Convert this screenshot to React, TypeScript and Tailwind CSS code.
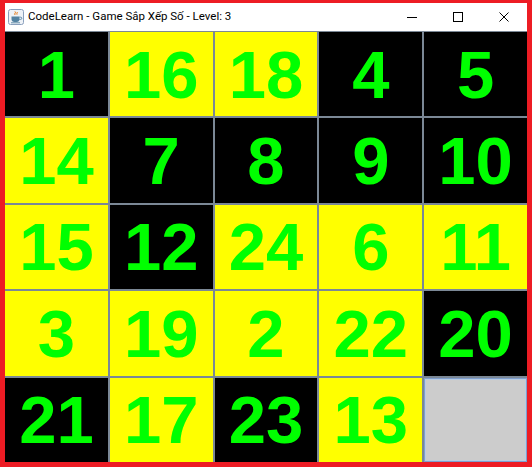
import React from 'react';

// Board layout, 0 = empty slot
const tiles = [1, 16, 18, 4, 5, 14, 7, 8, 9, 10, 15, 12, 24, 6, 11, 3, 19, 2, 22, 20, 21, 17, 23, 13, 0];
const yellow = new Set([16, 18, 14, 15, 24, 6, 11, 3, 19, 2, 22, 17, 13]);

const JavaIcon: React.FC = () => (
  <svg width="16" height="16" viewBox="0 0 16 16">
    <rect x="0.5" y="0.5" width="15" height="15" rx="2" fill="#eef2f7" stroke="#8aa0bd" />
    <path d="M7 2.5c1.5 1.2-1.2 2 0 3.4M9 3c1 1-1 1.6 0 2.6" stroke="#e76f00" strokeWidth="1" fill="none" />
    <path d="M3.5 7.5h8v2.5a3 3 0 0 1-3 3h-2a3 3 0 0 1-3-3z" fill="#5382a1" />
    <path d="M11.5 8.2h1.2a1.1 1.1 0 0 1 0 2.2h-1.4" stroke="#5382a1" strokeWidth="0.9" fill="none" />
    <path d="M3 13.8h9" stroke="#5382a1" strokeWidth="0.9" />
  </svg>
);

const App: React.FC = () => {
  return (
    <div className="w-[532px] h-[467px] bg-[#ed1c24] pt-[3px] px-[5px] pb-[5px] flex flex-col">
      {/* Title bar */}
      <div className="h-[28px] bg-white flex items-center shrink-0">
        <div className="pl-[3px] pr-[4px] flex items-center">
          <JavaIcon />
        </div>
        <span className="text-[11.5px] text-black font-['Roboto',sans-serif]">
          CodeLearn - Game Sắp Xếp Số - Level: 3
        </span>
        <div className="ml-auto flex items-center h-full">
          <div className="w-[46px] h-full flex items-center justify-center">
            <div className="w-[10px] h-px bg-black" />
          </div>
          <div className="w-[46px] h-full flex items-center justify-center">
            <div className="w-[10px] h-[10px] border border-black" />
          </div>
          <div className="w-[46px] h-full flex items-center justify-center">
            <svg width="10" height="10" viewBox="0 0 10 10">
              <path d="M0.5 0.5l9 9M9.5 0.5l-9 9" stroke="#000" strokeWidth="1" />
            </svg>
          </div>
        </div>
      </div>

      {/* Board */}
      <div className="flex-1 bg-[#7b8896] pt-px grid grid-cols-5 grid-rows-5 gap-[2px]">
        {tiles.map((n, i) =>
          n === 0 ? (
            <div
              key={i}
              className="bg-[#cccccc] border border-[#7f9fcd] shadow-[inset_0_0_0_1px_#b9cde3]"
            />
          ) : (
            <div
              key={i}
              className={`flex items-center justify-center ${yellow.has(n) ? 'bg-[#ffff00]' : 'bg-black'}`}
            >
              <span className="text-[67px] font-bold leading-none text-[#00ff00] font-['Liberation_Sans',Arial,sans-serif]">
                {n}
              </span>
            </div>
          )
        )}
      </div>
    </div>
  );
};

export default App;
